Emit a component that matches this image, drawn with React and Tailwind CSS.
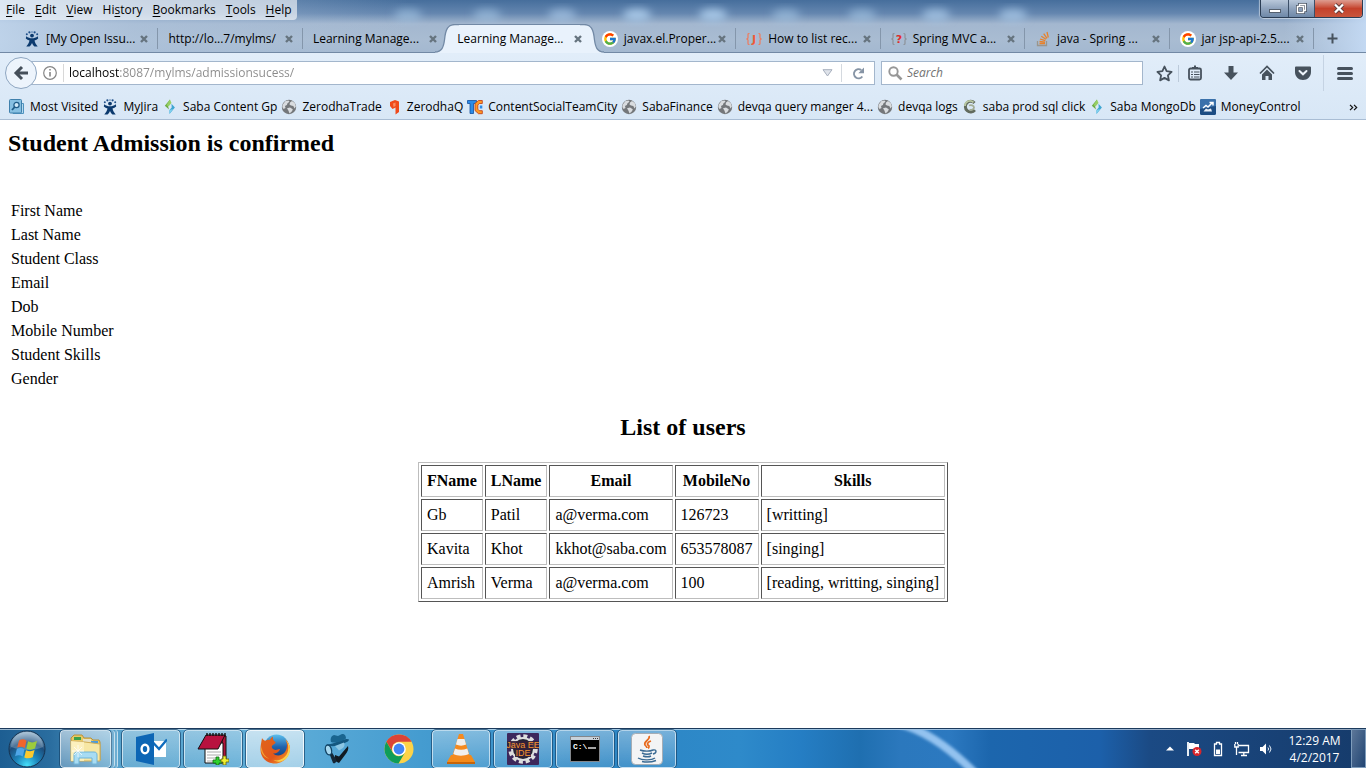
import React from 'react';
import { FcGoogle } from 'react-icons/fc';

function JiraIcon() {
  return (
    <svg width="16" height="16" viewBox="0 0 16 16" aria-hidden="true">
      <path d="M2.200 5.200C4 6.800 6 7.200 8 7.200s4-.4 5.800-2l.4 2.300c-1 1-2.300 1.700-3.700 2.100.6 2.300 1.600 4.200 3.200 5.900h-3.200C9.300 14.600 8.600 13.300 8 12c-.6 1.300-1.300 2.600-2.500 3.500H2.300c1.600-1.700 2.600-3.600 3.200-5.900C4.100 9.200 2.800 8.500 1.800 7.500z" fill="#0c3a6e" />
      <circle cx="8" cy="4.600" r="1.900" fill="#0c3a6e" />
      <circle cx="2.800" cy="3.300" r="1" fill="#20508a" />
      <circle cx="5.400" cy="1.300" r="1.100" fill="#20508a" />
      <circle cx="8" cy="1" r=".8" fill="#4b77a9" />
      <circle cx="10.600" cy="1.300" r="1.100" fill="#20508a" />
      <circle cx="13.200" cy="3.300" r="1" fill="#20508a" />
    </svg>
  );
}

function GoogleIcon() {
  return (
    <span className="flex size-4 items-center justify-center rounded-full bg-white">
      <FcGoogle size={14} />
    </span>
  );
}

function BracesIcon({ brace, color, letter }) {
  return (
    <svg width="16" height="16" viewBox="0 0 16 16" aria-hidden="true">
      <path d="M3.500 2.500H3a1 1 0 0 0-1 1V7L.8 8 2 9v3.500a1 1 0 0 0 1 1h.5M12.500 2.500h.5a1 1 0 0 1 1 1V7l1.200 1L14 9v3.500a1 1 0 0 1-1 1h-.5" fill="none" stroke={brace} strokeWidth="1.200" />
      <text x="8" y="12" textAnchor="middle" fontFamily="DejaVu Sans" fontWeight="bold" fontSize="11" fill={color}>{letter}</text>
    </svg>
  );
}

function StackIcon() {
  return (
    <svg width="16" height="16" viewBox="0 0 16 16" fill="none" strokeWidth="1.300" aria-hidden="true">
      <path d="M2.500 10v4.500h9V10" stroke="#9a958c" />
      <path d="M4.500 12.500h5.500M4.500 10.500l5.500.6M5 8l5.300 1.600M6.300 5.200l4.700 3M8.700 2.700l3.300 4.600M12 1l1.300 5.500" stroke="#e8812a" />
    </svg>
  );
}

function SabaIcon() {
  return (
    <svg width="16" height="16" viewBox="0 0 16 16" aria-hidden="true">
      <path d="M8 .5v4L6 7l1 3.500L2.800 6.800z" fill="#6fae45" />
      <path d="M8 .5L9.500 4 6.500 7.500 4.500 6z" fill="#97cf65" />
      <path d="M9.500 4.800l3.400 3.800L7.500 15v-4L9.700 8.500z" fill="#3fa6d2" />
      <path d="M7.500 11l3.500-1-3.500 5z" fill="#7fd0ee" />
    </svg>
  );
}

function GlobeIcon() {
  return (
    <svg width="16" height="16" viewBox="0 0 16 16" aria-hidden="true">
      <circle cx="8" cy="8" r="7.200" fill="#74777a" />
      <path d="M1.800 5.500L4.500 2l3-.6 1 1.400-2 1.500-.6 1.700L4 7l.5 2L2.500 10 1.300 8zM9 3.500l2-1.500 2.700 2 1.200 3.500-1.400 2-1.200-2.500-2.300-.4L8.500 5.500zM6 9.300L9 8.500l2.800 1.700-.8 2L8.500 14.500l-1-2.700z" fill="#d9dcdf" />
    </svg>
  );
}

function MostVisitedIcon() {
  return (
    <svg width="16" height="16" viewBox="0 0 16 16" aria-hidden="true">
      <path d="M12 4.500h2.500v10H4V13" fill="#b5daf0" stroke="#4f93bf" />
      <rect x=".5" y=".5" width="12" height="13.500" rx="1" fill="#86c0e2" stroke="#3f80ac" />
      <circle cx="7.500" cy="6" r="2.600" fill="#cde9f8" stroke="#1e5b87" strokeWidth="1.200" />
      <path d="M5.700 8L3 11" stroke="#1e5b87" strokeWidth="1.800" />
    </svg>
  );
}

function ZerodhaIcon() {
  return (
    <svg width="16" height="16" viewBox="0 0 16 16" aria-hidden="true">
      <path d="M4 3l5-2 4 1.500V13l-3.500 2.500V8.500L6.500 10 4 7z" fill="#f04a1b" />
      <path d="M7 4.500l2.500-1V7L7.500 8z" fill="#fa8d63" />
    </svg>
  );
}

function TeamCityIcon() {
  return (
    <svg width="16" height="16" viewBox="0 0 16 16" aria-hidden="true">
      <path d="M.5 1.500h9v3h-3v10H3v-10H.5z" fill="#2c8ce8" stroke="#124f9e" strokeWidth=".8" />
      <path d="M15.300 1.500h-3.800L8 4.500v7l3.500 3.200h3.800v-3h-3l-1.500-1.500V6l1.500-1.500h3z" fill="#ff9b24" stroke="#c6441b" strokeWidth=".9" />
      <rect x="12.800" y="6.500" width="2.500" height="3" fill="#2c8ce8" />
    </svg>
  );
}

function SqlIcon() {
  return (
    <svg width="16" height="16" viewBox="0 0 16 16" fill="none" aria-hidden="true">
      <path d="M12.500 4A5.300 5.300 0 1 0 12.800 11" stroke="#626b5e" strokeWidth="3" />
      <path d="M11.500 3.300A5 5 0 0 0 3 7" stroke="#b9c8a2" strokeWidth="1.800" />
      <path d="M7 6.500c2-1 5 0 5 2S9 11.500 7.500 10.500" stroke="#a3ad95" strokeWidth="1.800" />
    </svg>
  );
}

function MoneyIcon() {
  return (
    <svg width="16" height="16" viewBox="0 0 16 16" aria-hidden="true">
      <rect width="16" height="16" rx="1.500" fill="#1d4d83" />
      <path d="M0 1.500A1.500 1.500 0 0 1 1.500 0h13A1.500 1.500 0 0 1 16 1.500V7L0 10z" fill="#3a71ab" />
      <path d="M3 9l3-2.500 2 1.500L12 4M9.500 3.500H13v3" fill="none" stroke="#fff" strokeWidth="1.500" />
      <path d="M3.500 12.500h8.500l-1-3-3 1-2-1z" fill="#e8eff7" />
    </svg>
  );
}

const tabs = [
  { title: '[My Open Issu...', icon: <JiraIcon /> },
  { title: 'http://lo...7/mylms/' },
  { title: 'Learning Manage...' },
  { title: 'Learning Manage...', active: true },
  { title: 'javax.el.Proper...', icon: <GoogleIcon /> },
  { title: 'How to list rec...', icon: <BracesIcon brace="#ef7a5c" color="#ee5a36" letter="J" /> },
  { title: 'Spring MVC a...', icon: <BracesIcon brace="#8d9299" color="#e02c2c" letter="?" /> },
  { title: 'java - Spring ...', icon: <StackIcon /> },
  { title: 'jar jsp-api-2.5....', icon: <GoogleIcon /> },
];

const bookmarks = [
  ['Most Visited', MostVisitedIcon],
  ['MyJira', JiraIcon],
  ['Saba Content Gp', SabaIcon],
  ['ZerodhaTrade', GlobeIcon],
  ['ZerodhaQ', ZerodhaIcon],
  ['ContentSocialTeamCity', TeamCityIcon],
  ['SabaFinance', GlobeIcon],
  ['devqa query manger 4...', GlobeIcon],
  ['devqa logs', GlobeIcon],
  ['saba prod sql click', SqlIcon],
  ['Saba MongoDb', SabaIcon],
  ['MoneyControl', MoneyIcon],
];

const menus = [
  ['', 'F', 'ile'],
  ['', 'E', 'dit'],
  ['', 'V', 'iew'],
  ['Hi', 's', 'tory'],
  ['', 'B', 'ookmarks'],
  ['', 'T', 'ools'],
  ['', 'H', 'elp'],
];

function WindowControls() {
  return (
    <div className="mr-[3px] flex h-[18px] overflow-hidden rounded-b border border-t-0 border-[#2b3d54] shadow-[0_0_1px_1px_rgba(255,255,255,0.5)]">
      <button aria-label="Minimize" className="flex w-7 items-end justify-center border-r border-[#3c4f68] bg-linear-to-b from-[#b9c8da] via-[#8fa3bd] to-[#6f89a8] pb-1">
        <span className="h-1 w-3 border border-[#55606e] bg-white" />
      </button>
      <button aria-label="Restore" className="flex w-[26px] items-center justify-center border-r border-[#3c4f68] bg-linear-to-b from-[#b9c8da] via-[#8fa3bd] to-[#6f89a8]">
        <svg width="13" height="12" viewBox="0 0 13 12" fill="none">
          <path d="M4.500 3V1.500h6v6H9" stroke="#4b5665" strokeWidth="3" />
          <rect x="2.500" y="3.500" width="6" height="6" stroke="#4b5665" strokeWidth="3" />
          <path d="M4.500 3V1.500h6v6H9" stroke="#fff" strokeWidth="1.300" />
          <rect x="2.500" y="3.500" width="6" height="6" stroke="#fff" strokeWidth="1.500" />
        </svg>
      </button>
      <button aria-label="Close" className="flex w-[47px] items-center justify-center bg-linear-to-b from-[#dd9c90] via-[#c4412b] to-[#c9553c]">
        <svg width="12" height="11" viewBox="0 0 12 11">
          <path d="M2 1.500l8 8M10 1.500l-8 8" stroke="#5f3c3c" strokeWidth="4" />
          <path d="M2 1.500l8 8M10 1.500l-8 8" stroke="#fff" strokeWidth="2.300" />
        </svg>
      </button>
    </div>
  );
}

function Tab({ tab, divider }) {
  const { title, icon, active } = tab;
  return (
    <div className={active ? 'relative z-10 flex h-full min-w-0 flex-1 items-center pl-2.5 pr-2' : 'relative flex h-full min-w-0 flex-1 items-center pl-2.5 pr-2'}>
      {active && (
        <div className="absolute inset-y-0 -left-3 -right-3 flex">
          <svg width="24" height="29" viewBox="0 0 24 29" className="shrink-0">
            <path d="M0 29v-1c7 0 8.500-5 9.500-12C10.500 5 13 .5 20 .5h4V29z" fill="#e9f2fc" />
            <path d="M0 28c7 0 8.500-5 9.500-12C10.500 5 13 .5 20 .5h4" fill="none" stroke="#7289a5" strokeWidth="1.300" />
          </svg>
          <div className="flex-1 border-t border-[#7289a5] bg-[#e9f2fc]" />
          <svg width="24" height="29" viewBox="0 0 24 29" className="shrink-0">
            <path d="M24 29v-1c-7 0-8.500-5-9.500-12C13.500 5 11 .5 4 .5H0V29z" fill="#e9f2fc" />
            <path d="M24 28c-7 0-8.500-5-9.500-12C13.500 5 11 .5 4 .5H0" fill="none" stroke="#7289a5" strokeWidth="1.300" />
          </svg>
        </div>
      )}
      <button className="relative flex min-w-0 flex-1 items-center gap-1.5 whitespace-nowrap text-left">
        {icon}
        <span>{title}</span>
      </button>
      <button aria-label={'Close tab ' + title} className="relative flex size-3 shrink-0 items-center justify-center">
        <svg width="8" height="8" viewBox="0 0 8 8">
          <path d="M1 1l6 6M7 1L1 7" stroke="#66747f" strokeWidth="2.400" />
        </svg>
      </button>
      {divider && <span className="absolute right-0 top-1 h-[21px] w-px bg-[#8496ab]" />}
    </div>
  );
}

function TitleGlass() {
  return (
    <svg className="absolute inset-0 size-full" viewBox="0 0 1366 53" preserveAspectRatio="none" aria-hidden="true">
      <defs>
        <linearGradient id="glass" x1="0" y1="0" x2="0" y2="1">
          <stop offset="0" stopColor="#466e9c" />
          <stop offset=".25" stopColor="#6486af" />
          <stop offset=".45" stopColor="#a3b7cf" />
          <stop offset=".75" stopColor="#a9bcd2" />
          <stop offset="1" stopColor="#a3b8d0" />
        </linearGradient>
        <linearGradient id="edge" x1="0" y1="0" x2="1" y2="0">
          <stop offset="0" stopColor="#c3d8ef" stopOpacity=".8" />
          <stop offset=".1" stopColor="#b2c7df" stopOpacity=".5" />
          <stop offset=".3" stopColor="#b2c7df" stopOpacity="0" />
          <stop offset=".94" stopColor="#c0d5ee" stopOpacity="0" />
          <stop offset="1" stopColor="#c6dcf6" stopOpacity=".9" />
        </linearGradient>
        <filter id="haze" x="-50%" y="-50%" width="200%" height="200%">
          <feGaussianBlur stdDeviation="4" />
        </filter>
      </defs>
      <rect width="1366" height="53" fill="url(#glass)" />
      <rect width="1366" height="53" fill="url(#edge)" />
      <g filter="url(#haze)" fill="#a9c9e8">
        {[[408, 0.6], [487, 0.6], [562, 0.7], [637, 1], [713, 1], [786, 0.6], [862, 0.6], [936, 0.8], [1013, 0.8]].map(([x, o]) => (
          <ellipse key={x} cx={x} cy="15" rx="14" ry="6" opacity={o} />
        ))}
      </g>
    </svg>
  );
}

function ToolButton({ label, children }) {
  return (
    <button aria-label={label} className="flex h-6 w-9 items-center justify-center text-[#47525d]">{children}</button>
  );
}

function NavBar() {
  return (
    <div className="flex h-10 items-center pl-[5px]">
      <button aria-label="Back" className="relative z-10 flex size-8 shrink-0 items-center justify-center rounded-full border border-[#8ea6c1] bg-[#edf4fc]">
        <svg width="16" height="16" viewBox="0 0 16 16" fill="none" stroke="#454f5a" strokeWidth="3">
          <path d="M9 2L3 8l6 6M3.500 8H15" />
        </svg>
      </button>
      <div className="-ml-2 flex h-6 min-w-0 flex-1 items-center border border-[#a3b6cc] bg-white pl-3">
        <button aria-label="Site information" className="flex size-4 items-center justify-center">
          <svg width="14" height="14" viewBox="0 0 14 14" fill="none" stroke="#858585">
            <circle cx="7" cy="7" r="6.300" strokeWidth="1.200" />
            <path d="M7 6v4.500M7 3v1.600" strokeWidth="1.600" />
          </svg>
        </button>
        <span className="mx-[5px] h-[18px] w-px bg-[#d8d8d8]" />
        <input aria-label="Address" defaultValue="localhost:8087/mylms/admissionsucess/" className="min-w-0 flex-1 bg-[linear-gradient(to_right,#000_50px,#8a8a8a_50px)] bg-clip-text text-transparent caret-black outline-none" />
        <button aria-label="Show history" className="flex w-7 justify-center">
          <svg width="11" height="8" viewBox="0 0 11 8"><path d="M1 .7h9L5.500 7z" fill="#dfe3ea" stroke="#a7afbd" /></svg>
        </button>
        <span className="h-[18px] w-px bg-[#d4d9df]" />
        <button aria-label="Reload" className="flex w-8 justify-center">
          <svg width="13" height="13" viewBox="0 0 13 13">
            <path d="M10.300 9.500A4.600 4.600 0 1 1 9.300 3" fill="none" stroke="#8694a5" strokeWidth="2" />
            <path d="M12 .5v5.700H6.300z" fill="#8694a5" />
          </svg>
        </button>
      </div>
      <label className="ml-1.5 flex h-6 w-[262px] items-center gap-1 border border-[#a3b6cc] bg-white pl-1.5">
        <svg width="15" height="15" viewBox="0 0 15 15" fill="none" stroke="#979797" aria-hidden="true">
          <circle cx="5.500" cy="5.500" r="4.200" strokeWidth="1.900" />
          <path d="M8.500 8.500l5 5" strokeWidth="2.600" />
        </svg>
        <input aria-label="Search" placeholder="Search" className="min-w-0 flex-1 outline-none placeholder:italic placeholder:text-[#737373]" />
      </label>
      <div className="flex items-center pl-[3px]">
        <ToolButton label="Bookmark this page">
          <svg width="17" height="17" viewBox="0 0 17 17" fill="none" stroke="currentColor" strokeWidth="1.800" strokeLinejoin="round">
            <path d="M8.500 1.500l2.100 4.700 5 .6-3.700 3.500 1 5.100-4.400-2.500-4.400 2.500 1-5.100L1.400 6.800l5-.6z" />
          </svg>
        </ToolButton>
        <span className="-ml-1 -mr-0.5 h-[17px] w-px bg-[#bccada]" />
        <ToolButton label="Show bookmarks">
          <svg width="16" height="16" viewBox="0 0 16 16" fill="none" stroke="currentColor">
            <rect x="2" y="3.500" width="12" height="11" rx="1.500" strokeWidth="1.800" />
            <path d="M5 3h6M7 1.500h2" strokeWidth="2.200" />
            <path d="M4 7h2M7 7h5.500M4 9.500h2M7 9.500h5.500M4 12h2M7 12h5.500" strokeWidth="1.200" />
          </svg>
        </ToolButton>
        <ToolButton label="Downloads">
          <svg width="16" height="16" viewBox="0 0 16 16" fill="currentColor"><path d="M5.500 1h5v6.500H15L8 15 1 7.500h4.500z" /></svg>
        </ToolButton>
        <ToolButton label="Home">
          <svg width="16" height="16" viewBox="0 0 16 16">
            <path d="M1 8.500l7-7 7 7" fill="none" stroke="currentColor" strokeWidth="1.700" />
            <path d="M3 9.500l5-5 5 5V15H9.500v-4h-3v4H3z" fill="currentColor" />
          </svg>
        </ToolButton>
        <ToolButton label="Save to Pocket">
          <svg width="16" height="16" viewBox="0 0 16 16">
            <path d="M1 1.500h14a1 1 0 0 1 1 1V7c0 4.500-3.500 8-8 8S0 11.500 0 7V2.500a1 1 0 0 1 1-1z" fill="currentColor" />
            <path d="M4.500 6L8 9.300 11.500 6" fill="none" stroke="#eef4fb" strokeWidth="2" strokeLinecap="round" />
          </svg>
        </ToolButton>
        <span className="ml-0.5 h-9 w-px bg-[#c5d3e3]" />
        <button aria-label="Open menu" className="flex h-6 w-[42px] items-center justify-center">
          <span className="flex w-4 flex-col gap-0.5">
            <span className="h-[3px] rounded bg-[#47525d]" />
            <span className="h-[3px] rounded bg-[#47525d]" />
            <span className="h-[3px] rounded bg-[#47525d]" />
          </span>
        </button>
      </div>
    </div>
  );
}

function BrowserChrome() {
  return (
    <header className="border-b border-[#a9bdd4] bg-linear-to-b from-[#e9f2fc] to-[#d8e7f6]">
      <div className="relative flex flex-col">
        <TitleGlass />
        <div className="relative flex items-start justify-between pb-1">
          <nav className="flex h-5 items-center rounded-br bg-white/60 pl-px" aria-label="Menu bar">
            {menus.map(([pre, key, post]) => (
              <button key={key + post} className="px-[5px]">{pre}<u className="underline-offset-2">{key}</u>{post}</button>
            ))}
          </nav>
          <WindowControls />
        </div>
        <div className="relative flex h-[29px] items-center pl-3.5">
          <div className="absolute inset-x-0 bottom-0 h-px bg-[#7289a5]" />
          {tabs.map((tab, i) => (
            <Tab key={i} tab={tab} divider={i !== 2 && i !== 3} />
          ))}
          <button aria-label="New tab" className="flex w-[52px] pl-3">
            <svg width="13" height="13" viewBox="0 0 13 13"><path d="M6.500 1.500v10M1.500 6.500h10" stroke="#47525d" strokeWidth="2" /></svg>
          </button>
        </div>
      </div>
      <NavBar />
      <div className="flex h-[26px] items-center justify-between pt-0.5 pl-[9px] pr-2">
        <nav className="flex gap-1" aria-label="Bookmarks">
          {bookmarks.map(([label, Icon]) => (
            <a key={label} href="#" className="flex items-center gap-[5px] whitespace-nowrap"><Icon />{label}</a>
          ))}
        </nav>
        <button aria-label="More bookmarks">
          <svg width="9" height="7" viewBox="0 0 9 7" fill="none" stroke="#111" strokeWidth="1.200"><path d="M1 .8l2.700 2.700L1 6.200M5 .8l2.700 2.700L5 6.200" /></svg>
        </button>
      </div>
    </header>
  );
}

const fields = ['First Name', 'Last Name', 'Student Class', 'Email', 'Dob', 'Mobile Number', 'Student Skills', 'Gender'];
const columns = ['FName', 'LName', 'Email', 'MobileNo', 'Skills'];
const users = [
  ['Gb', 'Patil', 'a@verma.com', '126723', '[writting]'],
  ['Kavita', 'Khot', 'kkhot@saba.com', '653578087', '[singing]'],
  ['Amrish', 'Verma', 'a@verma.com', '100', '[reading, writting, singing]'],
];

function AdmissionPage() {
  return (
    <main className="flex-1 bg-white px-2 pt-2 font-['Liberation_Serif',serif] text-base text-black">
      <h2 className="text-2xl leading-[30px] font-bold">Student Admission is confirmed</h2>
      <table className="mt-[41px]">
        <tbody>
          {fields.map((f) => (
            <tr key={f}><td className="h-6 px-[3px] py-0">{f}</td><td /></tr>
          ))}
        </tbody>
      </table>
      <h2 className="mt-[21px] text-center text-2xl leading-[30px] font-bold">List of users</h2>
      <table className="mx-auto mt-5 border-separate border-spacing-0.5 border border-t-[#bdbdbd] border-r-[#555] border-b-[#555] border-l-[#bdbdbd] leading-5">
        <thead>
          <tr>
            {columns.map((c) => (
              <th key={c} className="border border-t-[#555] border-r-[#bdbdbd] border-b-[#bdbdbd] border-l-[#555] p-[5px] text-center font-bold">{c}</th>
            ))}
          </tr>
        </thead>
        <tbody>
          {users.map((u) => (
            <tr key={u[0]}>
              {u.map((v, i) => (
                <td key={i} className="border border-t-[#555] border-r-[#bdbdbd] border-b-[#bdbdbd] border-l-[#555] p-[5px]">{v}</td>
              ))}
            </tr>
          ))}
        </tbody>
      </table>
    </main>
  );
}

function StartOrb() {
  return (
    <svg width="38" height="38" viewBox="0 0 38 38" aria-hidden="true">
      <defs>
        <radialGradient id="orb" cx=".5" cy=".95" r=".9">
          <stop offset="0" stopColor="#46e0fa" />
          <stop offset=".35" stopColor="#1c86bd" />
          <stop offset=".7" stopColor="#1d4d7c" />
          <stop offset="1" stopColor="#8fb0c9" />
        </radialGradient>
      </defs>
      <circle cx="19" cy="19" r="18" fill="url(#orb)" stroke="#15324f" />
      <path d="M3 17a16 15 0 0 1 32 0c-8 4-22 4-32 0z" fill="#fff" opacity=".22" />
      <path d="M11 10.500c3-1.600 5-1.500 7.500.2L16.800 18c-2.500-1.700-5-1.800-7.600-.4z" fill="#f2642c" />
      <path d="M20 11.300c3 1.500 5.500 1.500 9-.3L27 18.500c-3 1.500-6 1.500-8.600.2z" fill="#9ccb3c" />
      <path d="M8.800 19c2.700-1.300 5-1.200 7.700.4l-1.800 7.200c-2.400-1.600-5-1.600-7.600-.3z" fill="#4ea6e8" />
      <path d="M18 20.200c3 1.300 5.500 1.300 8.600-.2l-1.900 7.200c-3 1.500-5.800 1.500-8.400.2z" fill="#fcc92d" />
    </svg>
  );
}

function ExplorerIcon() {
  return (
    <svg width="34" height="32" viewBox="0 0 34 32" aria-hidden="true">
      <path d="M2 5l3-3h8l2 3h7l2 2h6l1 2v18H3z" fill="#e9c865" stroke="#b8923a" />
      <path d="M5 4h7v3H5z" fill="#3ba04a" />
      <path d="M14 6h8v3h-8z" fill="#e8e2c4" /><path d="M22 8h7v3h-7z" fill="#4b9bdd" />
      <path d="M2 8l14 1 15 2v17H2z" fill="#f7e7a4" stroke="#d0ad57" />
      <path d="M2 8l13 1v19H2z" fill="#fcf2c3" opacity=".8" />
      <path d="M5 31v-9c0-2 1-3 3-3h17c2 0 3 1 3 3v9h-5v-6H10v6z" fill="#a8dcf3" stroke="#6fb4d8" />
      <path d="M9 12v12M3 18h12M5 14l8 8M13 14l-8 8" stroke="#fff" strokeWidth=".8" opacity=".9" />
    </svg>
  );
}

function OutlookIcon() {
  return (
    <svg width="32" height="32" viewBox="0 0 32 32" aria-hidden="true">
      <path d="M17 8h14v16H17z" fill="#fff" />
      <path d="M18 9.500l6 6.500 8-9.500" fill="none" stroke="#0f6cbd" strokeWidth="2.400" />
      <path d="M1 4l18-4v32L1 28z" fill="#0d66b5" />
      <ellipse cx="10" cy="16" rx="3.400" ry="4.300" fill="none" stroke="#fff" strokeWidth="2.400" />
    </svg>
  );
}

function NotepadIcon() {
  return (
    <svg width="32" height="32" viewBox="0 0 32 32" aria-hidden="true">
      <path d="M25 3h4v26h-4z" fill="#b0143a" stroke="#111" />
      <path d="M8 10h18v20H8z" fill="#fff" stroke="#111" />
      <path d="M10 19h14M10 22h14M10 25h9M10 28h8" stroke="#aaa" />
      <path d="M9 2h19l-7 14H1z" fill="#b8123f" stroke="#111" />
      <path d="M10 0v3M13 0v3M16 0v3M19 0v3M22 0v3M25 0v3M28 0v3" stroke="#111" strokeWidth="1.400" />
      <path d="M19 24h3v3h3v3h-3v2h-3v-2h-3v-3h3z" fill="#2ed22e" stroke="#116b11" strokeWidth=".8" />
      <path d="M26 23h3v3h3v3h-3v3h-3v-3h-2v-3h2z" fill="#f0ef2f" stroke="#65640c" strokeWidth=".8" />
    </svg>
  );
}

function FirefoxIcon() {
  return (
    <svg width="32" height="32" viewBox="0 0 32 32" aria-hidden="true">
      <defs>
        <linearGradient id="ffglobe" x1="0" y1="0" x2="0" y2="1">
          <stop offset="0" stopColor="#5cc0ee" />
          <stop offset=".5" stopColor="#1f62ac" />
          <stop offset="1" stopColor="#143a78" />
        </linearGradient>
        <linearGradient id="fffox" x1="0" y1="0" x2="1" y2="1">
          <stop offset="0" stopColor="#e0661b" />
          <stop offset=".6" stopColor="#e2571b" />
          <stop offset="1" stopColor="#f9a72b" />
        </linearGradient>
      </defs>
      <circle cx="17.500" cy="14" r="12.500" fill="url(#ffglobe)" />
      <path d="M3 5c.8 1.600 1.800 2.500 3.500 2.700C8 6.800 9.500 6.600 11 7c.4-1.600 1.400-2.700 3-3.500-.4 2.500.3 4.300 2.500 5.500.4 1.800-3.300 2.700-3.700 4.500-.2 1.800 1.500 3.400 3.700 3.400 2 0 2.700-1.200 4.500-.9-.8 3-3.800 4.800-7 4.500 3.200 3 9 2.500 12-1.500 2.600-3.700 2.500-8.500.5-12.500 2.500 2 4 5 4.500 8 0 9-6.500 16-15 16C7.500 30.500 1.500 24.500 1.500 16.500 1.500 12 2.500 9 3 5z" fill="url(#fffox)" />
      <path d="M26 6c4.500 5 4.500 13.500-.5 18-3 3-7.500 4-11 3 6.500 4.500 16-.5 16.500-10C31.200 12.500 29 8.500 26 6z" fill="#fbd04b" />
      <path d="M3 12c-.8 6 2 11 7 13.500C6 25 2.500 21 2 17z" fill="#f6a634" />
    </svg>
  );
}

function SpyIcon() {
  return (
    <svg width="30" height="32" viewBox="0 0 30 32" aria-hidden="true">
      <path d="M4 11c3 1 7-.5 12-2.500S25 5 27 6.500c0 2-3 3-8 5-6 2.200-12 2.300-15-.5z" fill="#14577f" />
      <path d="M9 9c-1-3 0-6 3-7l4 1 4-2c3 0 4 2 4 4.500C19 9 13 10.500 9 9z" fill="#1a6590" />
      <path d="M13 13l9-3.500c1 2 .5 4-1 5.500l-4 2.500z" fill="#8cc6e4" />
      <path d="M13 22l4 1.500 9-10.500c1 3-.5 6-3 9l-6 8-4-2z" fill="#111a22" />
      <path d="M6 17l3 1 5 8c1 3-1 5-3 4z" fill="#152736" />
      <ellipse cx="6.500" cy="17" rx="3" ry="5" transform="rotate(-15 6.500 17)" fill="#a6d7ef" stroke="#114263" strokeWidth="1.300" />
    </svg>
  );
}

function ChromeIcon() {
  return (
    <svg width="30" height="30" viewBox="0 0 30 30" aria-hidden="true">
      <circle cx="15" cy="15" r="14.500" fill="#fdd348" />
      <path d="M2.400 7.800A14.500 14.500 0 0 1 27.600 7.800H15a7 7 0 0 0-6.200 10.400z" fill="#db4437" />
      <path d="M2.400 7.800A14.500 14.500 0 0 0 14.500 29.500L21 18.600a7 7 0 0 1-12.300-.2z" fill="#0f9d58" />
      <circle cx="15" cy="15" r="6.800" fill="#fff" />
      <circle cx="15" cy="15" r="5.400" fill="#4285f4" />
    </svg>
  );
}

function VlcIcon() {
  return (
    <svg width="30" height="32" viewBox="0 0 30 32" aria-hidden="true">
      <path d="M5 22h20l4 7v2H1v-2z" fill="#f48b1b" />
      <path d="M1 29h28v2H1z" fill="#c76409" />
      <path d="M13 1h4l7 23c-4 3-14 3-18 0z" fill="#f58a1f" />
      <path d="M11.500 6h7l1.600 5.500c-3 1.500-7 1.500-10.200 0zM9 15.500c4 1.600 8 1.600 12.300 0l1.600 5.500c-5 2.300-11 2.300-15.600 0z" fill="#f1efed" />
    </svg>
  );
}

function JavaEeIcon() {
  return (
    <svg width="32" height="32" viewBox="0 0 32 32" aria-hidden="true">
      <rect width="32" height="32" rx="1" fill="#3d285c" />
      <circle cx="16" cy="16" r="13" fill="none" stroke="#dedede" strokeWidth="3.500" strokeDasharray="4 2.800" />
      <circle cx="16" cy="16" r="11" fill="#252333" stroke="#dedede" strokeWidth="2" />
      <rect y="8" width="32" height="8" fill="#33203a" opacity=".9" />
      <rect x="8" y="16" width="16" height="8" fill="#33203a" opacity=".9" />
      <g fontFamily="Liberation Sans" fontSize="9" fill="#f59230" textAnchor="middle">
        <text x="16" y="15">Java EE</text>
        <text x="16" y="23">IDE</text>
      </g>
    </svg>
  );
}

function CmdIcon() {
  return (
    <svg width="30" height="26" viewBox="0 0 30 26" aria-hidden="true">
      <rect x=".5" y=".5" width="29" height="25" fill="#000" stroke="#83878c" />
      <path d="M1 1h28v3H1z" fill="#c9d2da" />
      <path d="M23 2.500h1M25 2.500h1M27 2.500h1" stroke="#333" />
      <text x="3" y="13" fontFamily="Liberation Mono" fontWeight="bold" fontSize="8" fill="#fff">C:\</text>
      <path d="M18 12h8" stroke="#fff" strokeWidth="1.300" />
    </svg>
  );
}

function JavaIcon() {
  return (
    <svg width="32" height="32" viewBox="0 0 32 32" aria-hidden="true">
      <rect x=".5" y=".5" width="31" height="31" rx="4" fill="#f3f4f5" stroke="#a5adb5" />
      <path d="M18 3c2 4-6 5-4 9 1 1 2 2 2 3M20 8c-3 1-5 3-2 5 0 1 0 2-1 2" fill="none" stroke="#e86a1c" strokeWidth="1.700" />
      <g fill="none" stroke="#3a6a93" strokeWidth="1.400">
        <path d="M9 17c4 1.500 10 1.500 13 0M11 20c3 1.500 7 1.500 10 0M12 23c3 1 6 1 8 0M22 17c4-1 4 3 0 4M7 25c5 3 14 2 17 0M11 28.500c5 1 10 .5 14-1" />
      </g>
    </svg>
  );
}

const taskItems = [
  ['File Explorer', ExplorerIcon, 'stack'],
  ['Outlook', OutlookIcon, 'open'],
  ['Notepad', NotepadIcon, 'open'],
  ['Firefox', FirefoxIcon, 'active'],
  ['Process viewer', SpyIcon, 'pinned'],
  ['Chrome', ChromeIcon, 'pinned'],
  ['VLC', VlcIcon, 'open'],
  ['Java EE IDE', JavaEeIcon, 'open'],
  ['Command Prompt', CmdIcon, 'open'],
  ['Java', JavaIcon, 'open'],
];

const taskStyles = {
  open: 'flex h-[38px] w-[58px] items-center justify-center rounded-sm border border-white/60 bg-linear-to-b from-white/35 to-white/10 outline outline-[#17456b]/70',
  active: 'flex h-[38px] w-[58px] items-center justify-center rounded-sm border border-white/80 bg-linear-to-b from-white/65 to-white/45 outline outline-[#17456b]/70',
  pinned: 'flex h-[38px] w-[58px] items-center justify-center',
  stack: 'flex h-[38px] w-[58px]',
};

function Taskbar() {
  return (
    <footer className="flex h-10 items-center justify-between border-t border-[#1c3a5c] bg-[linear-gradient(to_right,#1d5e92_0px,#2a6d9f_50px,#57a3cd_120px,#5eadd8_280px,#459cd0_420px,#2d86c4_620px,#2e8aca_740px,#257ec4_800px,#1f6fb0_860px,#2b78bd_900px,#2c79c0_950px,#1c66ad_990px,#1c60aa_1100px,#1b4a84_1150px,#163b6b_1366px)] shadow-[inset_0_1px_0_rgba(255,255,255,0.55)]">
      <div className="flex items-center">
        <button aria-label="Start" className="flex w-[60px] pl-2"><StartOrb /></button>
        <div className="flex gap-1">
          {taskItems.map(([name, Icon, kind]) => (
            <button key={name} aria-label={name} className={taskStyles[kind]}>
              {kind === 'stack' ? (
                <>
                  <span className="flex h-full w-[51px] items-center justify-center rounded-sm border border-white/60 bg-linear-to-b from-white/55 to-white/25 outline outline-[#17456b]/70"><Icon /></span>
                  <span className="h-full w-1 rounded-r-sm border-r border-white/60 bg-white/20" />
                  <span className="h-full w-[3px] rounded-r-sm border-r border-white/60 bg-white/15" />
                </>
              ) : (
                <Icon />
              )}
            </button>
          ))}
        </div>
      </div>
      <svg width="110" height="38" viewBox="0 0 110 38" className="mr-40 ml-auto" aria-hidden="true">
        <defs><filter id="soft"><feGaussianBlur stdDeviation="1.500" /></filter></defs>
        <path d="M12-6c24 6 50 24 76 50" fill="none" stroke="#9fcbf5" strokeWidth="8" opacity=".9" filter="url(#soft)" />
      </svg>
      <div className="flex h-full items-center text-white">
        <div className="flex items-center">
          <button aria-label="Show hidden icons" className="flex w-6 justify-center">
            <svg width="8" height="5" viewBox="0 0 8 5"><path d="M4 .5L8 4.500H0z" fill="#fff" /></svg>
          </button>
          <button aria-label="Action Center" className="flex w-6 justify-center">
            <svg width="16" height="16" viewBox="0 0 16 16">
              <path d="M2 1v14" stroke="#fff" strokeWidth="1.800" />
              <path d="M3 2h5l1 1h4v6H8L7 8H3z" fill="#fff" />
              <circle cx="11" cy="10.500" r="4.500" fill="#d9252b" />
              <path d="M9.200 8.700l3.600 3.600M12.800 8.700l-3.600 3.600" stroke="#fff" strokeWidth="1.400" />
            </svg>
          </button>
          <button aria-label="Battery" className="flex w-6 justify-center">
            <svg width="10" height="16" viewBox="0 0 10 16" fill="none" stroke="#fff">
              <path d="M3.500 1.500h3V3H8.500v11.500h-7V3h2z" strokeWidth="1.300" />
              <path d="M3 8.500h4v4.500H3z" fill="#fff" stroke="none" />
            </svg>
          </button>
          <button aria-label="Network" className="flex w-6 justify-center">
            <svg width="16" height="16" viewBox="0 0 16 16" fill="none" stroke="#fff" strokeWidth="1.300">
              <path d="M5 4.500h9.500v7H4.500M7 14.500h6M9.800 12v2.500M2.500 6.500V14M.8 3v3h3.400V3M1.500 1v2M3.500 1v2" />
            </svg>
          </button>
          <button aria-label="Volume" className="flex w-6 justify-center">
            <svg width="14" height="14" viewBox="0 0 14 14"><path d="M1 5h2.500L7 1.500v11L3.500 9H1z" fill="#fff" /><path d="M9 5.500q1.200 1.500 0 3M10.500 3.500q3 3.500 0 7" fill="none" stroke="#e8f0f8" /></svg>
          </button>
        </div>
        <button className="w-[73px] text-center leading-[17px]">12:29 AM<br />4/2/2017</button>
        <button aria-label="Show desktop" className="h-full w-[15px] border border-[#7f9dbc] bg-linear-to-br from-white/30 to-white/5" />
      </div>
    </footer>
  );
}

export default function App() {
  return (
    <div className="flex min-h-screen flex-col bg-white font-['Open_Sans','Noto_Sans',sans-serif] text-[12px] leading-4 text-black">
      <BrowserChrome />
      <AdmissionPage />
      <Taskbar />
    </div>
  );
}
